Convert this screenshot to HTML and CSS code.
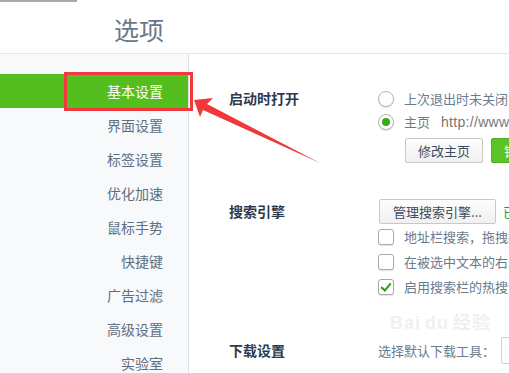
FILE: index.html
```html
<!DOCTYPE html>
<html lang="zh-CN">
<head>
  <meta charset="UTF-8">
  <title>选项</title>
  <link rel="stylesheet" href="styles.css">
</head>
<body>
<div class="page">
  <div class="topbar"></div>
  <div class="header">
    <h1 class="title">选项</h1>
  </div>

  <div class="main">
    <!-- 左侧菜单 -->
    <ul class="sidebar">
      <li class="active">基本设置</li>
      <li>界面设置</li>
      <li>标签设置</li>
      <li>优化加速</li>
      <li>鼠标手势</li>
      <li>快捷键</li>
      <li>广告过滤</li>
      <li>高级设置</li>
      <li>实验室</li>
    </ul>

    <!-- 右侧内容 -->
    <div class="content">
      <div class="section sec-start">
        <div class="label">启动时打开</div>
        <div class="options">
          <div class="row"><span class="radio"></span><span class="text">上次退出时未关闭的页面</span></div>
          <div class="row"><span class="radio checked"></span><span class="text">主页</span><span class="url">http://www.hao123.com/</span></div>
          <div class="btn-row">
            <span class="btn">修改主页</span>
            <span class="btn btn-green">锁定主页</span>
          </div>
        </div>
      </div>

      <div class="section sec-search">
        <div class="label">搜索引擎</div>
        <div class="options">
          <div class="btn-row first">
            <span class="btn btn-wide">管理搜索引擎...</span>
            <span class="green-text">已设置</span>
          </div>
          <div class="row tall"><span class="check"></span><span class="text">地址栏搜索，拖拽搜索</span></div>
          <div class="row tall"><span class="check"></span><span class="text">在被选中文本的右上方显示</span></div>
          <div class="row tall"><span class="check checked"></span><span class="text">启用搜索栏的热搜词</span></div>
        </div>
      </div>

      <div class="section sec-download">
        <div class="label">下载设置</div>
        <div class="options">
          <div class="row tall"><span class="plain">选择默认下载工具：</span><span class="select"></span></div>
        </div>
      </div>
    </div>
  </div>

  <!-- 标注：红框和箭头 -->
  <div class="mark-box"></div>
  <svg class="mark-arrow" width="509" height="373" viewBox="0 0 509 373">
    <polygon points="194,100 213,98 207,104 320,163 203,110 200,117" fill="#f0383a"/>
  </svg>
  <div class="watermark">Bai<span class="wm-du">du</span>经验</div>
</div>
</body>
</html>
```

FILE: styles.css
```css
body {
  margin: 0;
  font-family: "Noto Sans CJK SC", "Noto Sans", sans-serif;
  background: #fff;
}
.page {
  position: relative;
  width: 509px;
  height: 373px;
  overflow: hidden;
}
.topbar {
  width: 77px;
  height: 2px;
  background: #a9a9a9;
}
/* 顶部标题 */
.header {
  height: 51px;
  border-bottom: 1px solid #e4e6e8;
}
.title {
  margin: 0;
  padding: 11px 0 0 114px;
  font-size: 25px;
  font-weight: normal;
  line-height: 32px;
  color: #6a7888;
}
.main {
  display: flex;
  height: 319px;
}
/* 左侧菜单 */
.sidebar {
  list-style: none;
  margin: 0;
  padding: 20px 0 0 0;
  width: 188px;
  flex: none;
  background: #f8f9fb;
  border-right: 1px solid #dcdfe3;
}
.sidebar li {
  height: 34px;
  line-height: 34px;
  padding-right: 25px;
  text-align: right;
  font-size: 14px;
  color: #5f6f82;
}
.sidebar li.active {
  background: #54be1e;
  color: #fff;
}
/* 右侧内容 */
.content {
  flex: none;
  width: 400px;
  padding-left: 40px;
}
.section {
  display: flex;
}
.sec-start {
  margin-top: 33px;
}
.sec-search {
  margin-top: 36px;
}
.sec-download {
  margin-top: 39px;
}
.label {
  width: 149px;
  flex: none;
  height: 23px;
  line-height: 23px;
  font-size: 14px;
  font-weight: bold;
  color: #2d3b4c;
}
.sec-search .label,
.sec-download .label {
  height: 25px;
  line-height: 25px;
}
.options {
  white-space: nowrap;
}
.row {
  display: flex;
  align-items: center;
  height: 23px;
}
.row.tall {
  height: 25px;
}
.text {
  margin-left: 10px;
  font-size: 13px;
  color: #6b7b8e;
}
.url {
  margin-left: 11px;
  font-size: 14px;
  letter-spacing: 0.3px;
  color: #777;
  font-family: "Liberation Sans", "Noto Sans CJK SC", sans-serif;
}
.plain {
  font-size: 13px;
  color: #6b7b8e;
}
.radio {
  position: relative;
  width: 14px;
  height: 14px;
  border: 1px solid #b4b4b4;
  border-radius: 50%;
  background: #fff;
  box-shadow: 0 1px 1px rgba(0, 0, 0, 0.12);
  flex: none;
}
.radio.checked::after {
  content: "";
  position: absolute;
  left: 3px;
  top: 3px;
  width: 8px;
  height: 8px;
  border-radius: 50%;
  background: #38ac18;
}
.check {
  position: relative;
  width: 14px;
  height: 14px;
  border: 1px solid #a9a9a9;
  border-radius: 3px;
  background: #fff;
  box-shadow: 0 1px 1px rgba(0, 0, 0, 0.12);
  flex: none;
}
.check.checked::after {
  content: "";
  position: absolute;
  left: 4px;
  top: 1px;
  width: 4px;
  height: 8px;
  border-right: 2px solid #2e9d12;
  border-bottom: 2px solid #2e9d12;
  transform: rotate(40deg);
}
.btn-row {
  display: flex;
  align-items: center;
  gap: 8px;
  margin-top: 5px;
  margin-left: 27px;
}
.btn-row.first {
  margin-top: 0;
  margin-left: 1px;
  gap: 7px;
}
.btn {
  display: inline-block;
  box-sizing: border-box;
  width: 78px;
  height: 25px;
  line-height: 23px;
  border: 1px solid #c8c8c8;
  border-radius: 2px;
  background: linear-gradient(#fdfdfd, #f0f0f0);
  text-align: center;
  font-size: 13px;
  color: #3d4b5c;
}
.btn-wide {
  width: 117px;
}
.btn-green {
  background: #5cc526;
  border-color: #4eae1c;
  color: #fff;
}
.green-text {
  font-size: 13px;
  color: #2a9a3a;
}
.select {
  display: inline-block;
  width: 60px;
  height: 25px;
  margin-left: 6px;
  border: 1px solid #d0d0d0;
  border-radius: 2px;
  background: #fff;
}
/* 标注 */
.mark-box {
  position: absolute;
  left: 64px;
  top: 72px;
  width: 123px;
  height: 33px;
  border: 3px solid #f2393b;
}
.mark-arrow {
  position: absolute;
  left: 0;
  top: 0;
}
.watermark {
  position: absolute;
  left: 390px;
  top: 312px;
  font-family: "Liberation Sans", "Noto Sans CJK SC", sans-serif;
  font-size: 18px;
  line-height: 22px;
  font-weight: bold;
  color: rgba(225, 225, 225, 0.5);
  letter-spacing: 1px;
}
.wm-du {
  margin: 0 4px;
}
```
